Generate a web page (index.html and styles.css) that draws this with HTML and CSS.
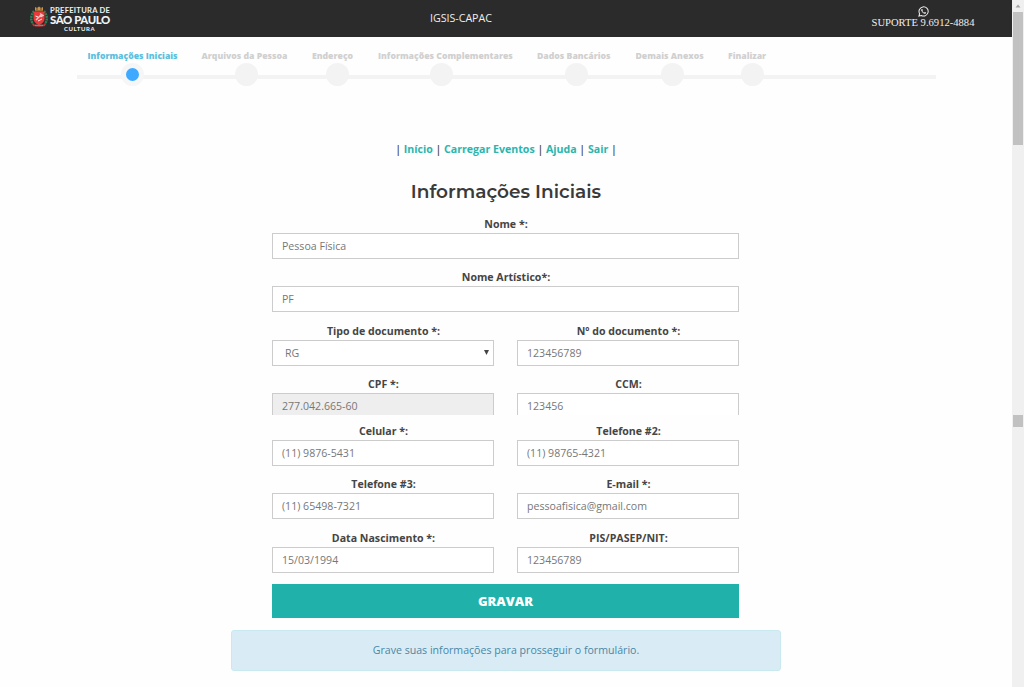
FILE: index.html
```html
<!DOCTYPE html>
<html lang="pt-BR">
<head>
<meta charset="utf-8">
<title>IGSIS-CAPAC</title>
<link rel="stylesheet" href="styles.css">
</head>
<body>
<div class="page">
  <header class="topbar">
    <div class="brand">
      <svg class="crest" viewBox="0 0 18 22" width="18" height="22">
        <path d="M4 5 Q-1 12 3 18 M14 5 Q19 12 15 18" fill="none" stroke="#2f7d54" stroke-width="2.4" stroke-dasharray="2 .7"/>
        <path d="M5 1 L7 2 L9 .6 L11 2 L13 1 V5.5 H5Z" fill="#c9954b"/>
        <path d="M6 3H8M10 3H12M5 5H13" stroke="#6b4729" stroke-width="1"/>
        <path d="M3.5 6H14.5V13Q14 17 9 19Q4 17 3.500 13Z" fill="#e83a3d"/>
        <path d="M6 14L11.500 8.500M10 7.500L13 9.500L10.500 11" fill="none" stroke="#f3c8c4" stroke-width="1.400"/>
        <path d="M5.500 10L8 11M8 15L12 13" stroke="#fff0e8" stroke-width="1"/>
        <path d="M2 17Q9 22 16 17L15 20Q9 21.500 3 20Z" fill="#c83235"/>
        <path d="M5 19.200H13" stroke="#d89b91" stroke-width=".8"/>
      </svg>
      <div class="brand-text">
        <span class="brand-top">PREFEITURA DE</span>
        <span class="brand-main">SÃO PAULO</span>
        <span class="brand-sub">CULTURA</span>
      </div>
    </div>
    <div class="system">IGSIS-CAPAC</div>
    <div class="support">
      <svg viewBox="0 0 24 24" width="11" height="11">
        <path d="M2 22L3.500 16.800A10 10 0 1 1 7.300 20.600Z" fill="none" stroke="#eee" stroke-width="2.200"/>
        <path d="M8.700 6.500C7.300 7 6.500 8.200 7.100 10C8.300 13.500 10.900 16.100 14.200 17C16 17.400 17.700 16.300 17.600 14.400L14.700 13L13.300 14.500C11.500 13.700 10.300 12.500 9.500 10.900L10.500 9.500L9.400 6.600Z" fill="#eee"/>
      </svg>
      <span>SUPORTE 9.6912-4884</span>
    </div>
  </header>

  <ol class="steps">
    <li class="step active"><span>Informações Iniciais</span><i></i></li>
    <li class="step"><span>Arquivos da Pessoa</span><i></i></li>
    <li class="step"><span>Endereço</span><i></i></li>
    <li class="step"><span>Informações Complementares</span><i></i></li>
    <li class="step"><span>Dados Bancários</span><i></i></li>
    <li class="step"><span>Demais Anexos</span><i></i></li>
    <li class="step"><span>Finalizar</span><i></i></li>
  </ol>

  <main class="content">
    <nav class="menu">| <a>Início</a> | <a>Carregar Eventos</a> | <a>Ajuda</a> | <a>Sair</a> |</nav>
    <h1 class="title">Informações Iniciais</h1>
    <form class="form">
      <label class="field wide"><b>Nome *:</b><span class="input">Pessoa Física</span></label>
      <label class="field wide"><b>Nome Artístico*:</b><span class="input">PF</span></label>
      <label class="field"><b>Tipo de documento *:</b><span class="input select">RG<svg class="caret" viewBox="0 0 5 5" width="5" height="5"><path d="M0 0H5L2.500 5Z" fill="#444"/></svg></span></label>
      <label class="field"><b>Nº do documento *:</b><span class="input">123456789</span></label>
      <label class="field cut"><b>CPF *:</b><span class="input readonly">277.042.665-60</span></label>
      <label class="field cut"><b>CCM:</b><span class="input">123456</span></label>
      <label class="field"><b>Celular *:</b><span class="input">(11) 9876-5431</span></label>
      <label class="field"><b>Telefone #2:</b><span class="input">(11) 98765-4321</span></label>
      <label class="field"><b>Telefone #3:</b><span class="input">(11) 65498-7321</span></label>
      <label class="field"><b>E-mail *:</b><span class="input">pessoafisica@gmail.com</span></label>
      <label class="field"><b>Data Nascimento *:</b><span class="input">15/03/1994</span></label>
      <label class="field"><b>PIS/PASEP/NIT:</b><span class="input">123456789</span></label>
    </form>
    <button class="save" type="button">GRAVAR</button>
    <div class="notice">Grave suas informações para prosseguir o formulário.</div>
  </main>
</div>
<div class="scrollbar">
  <svg class="up" viewBox="0 0 12 12" width="12" height="12"><path d="M3.500 7.500L6 4.500L8.500 7.500Z" fill="#a3a3a3"/></svg>
  <div class="thumb"></div>
  <div class="marker"></div>
</div>
</body>
</html>
```
FILE: styles.css
```css
* { box-sizing: border-box; }
body {
  margin: 0;
  height: 687px;
  overflow: hidden;
  display: flex;
  background: #fefefe;
  font-family: "Open Sans", sans-serif;
  font-size: 10.6px;
  color: #454545;
}
.page { width: 1012px; }

.topbar {
  height: 37px;
  background: #2b2b2b;
  color: #eee;
  display: grid;
  grid-template-columns: 400px 122px 1fr;
}
.brand { display: flex; padding: 6px 0 0 30px; gap: 2px; }
.brand-text {
  display: flex;
  flex-direction: column;
  width: 60px;
  font-family: Lato, sans-serif;
  font-weight: 700;
  white-space: nowrap;
  color: #eef3f4;
}
.brand-top { font-size: 7.6px; line-height: 8px; letter-spacing: .25px; }
.brand-main { font-size: 11.4px; line-height: 12px; font-weight: 900; letter-spacing: -.4px; }
.brand-sub { font-size: 6px; line-height: 6px; letter-spacing: .6px; padding-left: 14px; }
.system { font-size: 10.7px; line-height: 36px; text-align: center; letter-spacing: -.05px; }
.support {
  display: flex;
  flex-direction: column;
  align-items: center;
  width: 110px;
  margin-left: 346px;
  padding-top: 6px;
  font: 10.6px/11px "Liberation Serif", serif;
  white-space: nowrap;
}

.steps {
  position: relative;
  list-style: none;
  margin: 0;
  padding: 12px 0 0 87.5px;
  height: 101px;
  display: grid;
  grid-template-columns: 90px 86.5px 42px 135px 74.5px 68.5px 38px;
  column-gap: 24px;
}
.steps::before {
  content: "";
  position: absolute;
  left: 77px;
  top: 38px;
  width: 859px;
  height: 4px;
  background: #f3f3f3;
}
.step {
  position: relative;
  white-space: nowrap;
  font-size: 8.66px;
  line-height: 14px;
  font-weight: 800;
  color: #d0d0d0;
}
.step span { display: block; }
.step i { display: block; width: 23px; height: 23px; border-radius: 50%; background: #f3f3f3; margin-left: 33px; }
.step:nth-child(3) i { margin-left: 14px; }
.step:nth-child(4) i { margin-left: 51.5px; }
.step:nth-child(5) i { margin-left: 27.5px; }
.step:nth-child(6) i { margin-left: 25px; }
.step:nth-child(7) i { margin-left: 13px; }
.step.active { color: #5bc0de; }
.step.active i { border: 5.5px solid #f6f6f6; background: #3fa9ff; }

.content { width: 550px; margin-left: 231px; text-align: center; }
.menu { padding-top: 3px; line-height: 16px; font-weight: 600; white-space: nowrap; }
.menu a { color: #2bb5ad; font-weight: 700; }
.title {
  margin: 22px 0 0;
  height: 37px;
  line-height: 26px;
  font-family: Montserrat, Inter, sans-serif;
  font-size: 18.5px;
  font-weight: 600;
  color: #3a3a3a;
}

.form {
  width: 467px;
  margin-left: 41px;
  display: grid;
  grid-template-columns: 222px 222px;
  grid-template-rows: 53.300px 53.700px 53.300px 46.700px 53.300px 53.700px 54px;
  column-gap: 23px;
}
.field { display: flex; flex-direction: column; }
.field b { height: 17px; line-height: 16px; font-weight: 700; padding-left: 1px; }
.wide { grid-column: span 2; }
.input {
  height: 26px;
  border: 1px solid #ccc;
  background: #fff;
  padding: 0 9px;
  line-height: 25px;
  text-align: left;
  color: #777;
}
.select { display: flex; justify-content: space-between; padding: 0 4px 0 12px; }
.caret { margin-top: 9px; }
.readonly { background: #eee; }
.cut .input { height: 22px; border-bottom: 0; }

.save {
  display: block;
  width: 467px;
  height: 34px;
  margin: 0 0 0 41px;
  padding: 0;
  border: 0;
  background: #20b2aa;
  color: #fff;
  font: 800 13px "Open Sans", sans-serif;
}
.notice {
  margin-top: 12px;
  height: 41px;
  line-height: 39px;
  border: 1px solid #c9e9f1;
  border-radius: 3px;
  background: #d9ecf6;
  color: #4a86a5;
}

.scrollbar { width: 12px; background: #f0f0f0; padding-left: 1px; }
.up { display: block; margin-left: -1px; }
.thumb { width: 10px; height: 133px; background: #c1c1c1; }
.marker { width: 10px; height: 12px; margin-top: 270px; background: #c1c1c1; }
```
